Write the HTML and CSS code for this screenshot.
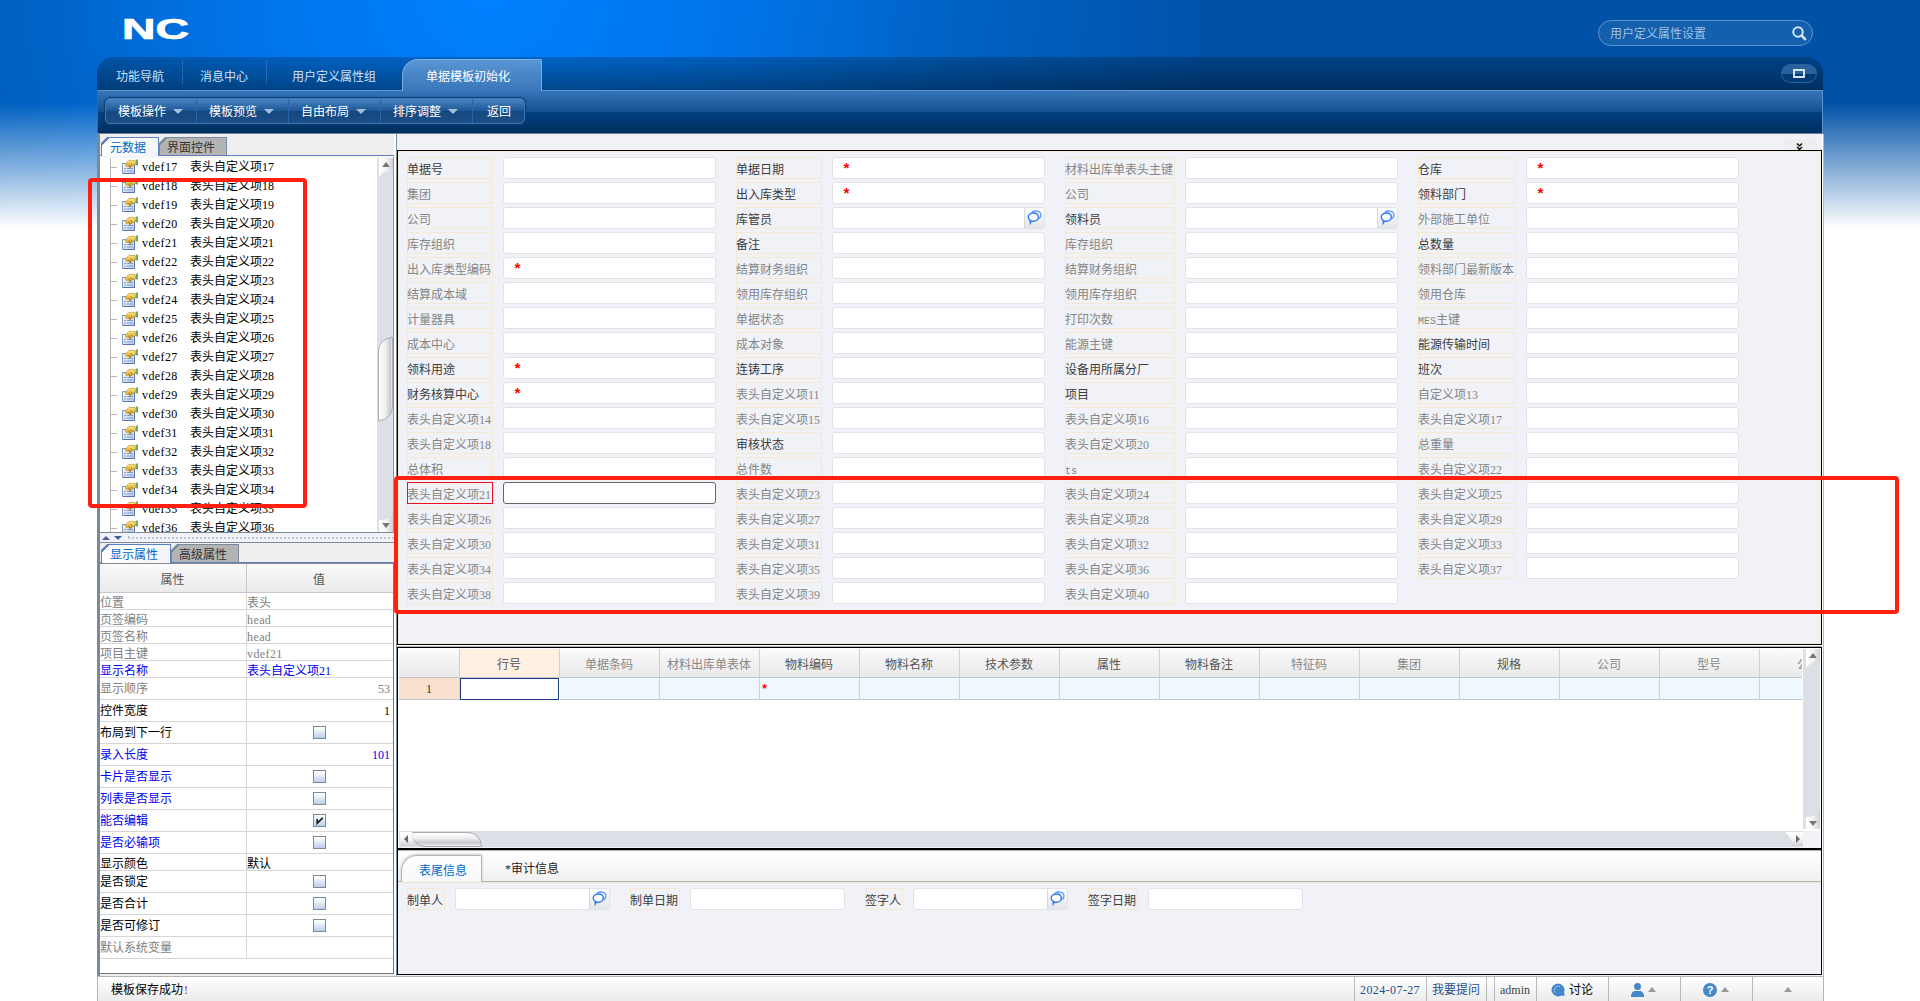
FILE: index.html
```html
<!DOCTYPE html>
<html lang="zh-CN">
<head>
<meta charset="utf-8">
<title>单据模板初始化</title>
<link rel="stylesheet" href="styles.css">
</head>
<body>
<svg class="defs" width="0" height="0" aria-hidden="true">
  <defs>
    <linearGradient id="gold" x1="0" y1="0" x2="0" y2="1"><stop offset="0" stop-color="#ffe680"/><stop offset="1" stop-color="#d29a1c"/></linearGradient>
    <linearGradient id="sheet" x1="0" y1="0" x2="1" y2="1"><stop offset="0" stop-color="#fff"/><stop offset="1" stop-color="#b4caec"/></linearGradient>
    <symbol id="i-prop" viewBox="0 0 17 16">
      <path d="M.5 4.500h12v10H.5z" fill="url(#sheet)" stroke="#7f98c0"/>
      <path d="M1 14.500h11.500v-9" fill="none" stroke="#5a76a8"/>
      <path d="M2 9.500h2M5 9.500h6M2 12h2M5 12h6" stroke="#8299c2"/>
      <path d="M3 5.500l4-4.200h3l3 .2.800 4-3.300 1.200-2.500 2.500-2-2.200-1.500.8z" fill="url(#gold)" stroke="#b08a2c" stroke-width=".6"/>
      <path d="M6.500 6l2.500 2M8.500 4.500l2 2" stroke="#7a5a14" stroke-width=".8"/>
      <path d="M13.800 .5h2.200v6h-2.200z" fill="#6bab62"/>
    </symbol>
    <symbol id="i-ref" viewBox="0 0 15 15">
      <path d="M5 2.300C7.500 .2 13.700 .6 13.900 4.800c0 2.200-1.200 3.600-2.700 4.200" fill="none" stroke="#5c9bf8" stroke-width="1.300"/>
      <path d="M6.300 3c3 0 5 1.800 5 4.100s-2 4.200-5 4.200c-.8 0-1.300-.1-1.900-.3L3.300 13 3.200 10.300C2 9.500 1.200 8.400 1.200 7.100 1.200 4.800 3.300 3 6.300 3z" fill="#fff" stroke="#2f7bf5" stroke-width="1.400"/>
    </symbol>
  </defs>
</svg>

<header class="top">
  <svg class="logo" width="68" height="24" viewBox="0 0 68 24"><text x="0" y="22" textLength="67" lengthAdjust="spacingAndGlyphs">NC</text></svg>
  <div class="search"><span>用户定义属性设置</span>
    <svg width="15" height="15" viewBox="0 0 15 15"><circle cx="6" cy="6" r="4.700" fill="none" stroke="#d5e4f5" stroke-width="2"/><path d="M9.500 9.500l4.300 4.300" stroke="#d5e4f5" stroke-width="2.600"/></svg>
  </div>
</header>

<div class="frame">
  <nav class="nav">
    <span class="nav-item n1">功能导航</span>
    <span class="nav-item n2">消息中心</span>
    <span class="nav-item n3">用户定义属性组</span>
    <span class="nav-item active">单据模板初始化</span>
    <span class="restore"><i></i></span>
  </nav>
  <div class="toolbar">
    <div class="tool-group">
      <span class="tool">模板操作<i></i></span>
      <span class="tool">模板预览<i></i></span>
      <span class="tool">自由布局<i></i></span>
      <span class="tool">排序调整<i></i></span>
      <span class="tool last">返回</span>
    </div>
  </div>

  <main class="main">
    <aside class="side">
      <div class="tabs t1"><span class="tab on">元数据</span><span class="tab">界面控件</span></div>
      <div class="tree-box">
        <div class="tree" id="tree"></div>
        <div class="vscroll"><i class="up"></i><b></b><i class="down"></i></div>
      </div>
      <div class="splitter"><i class="up"></i><i class="down"></i><em></em></div>
      <div class="tabs t2"><span class="tab on">显示属性</span><span class="tab">高级属性</span></div>
      <div class="props-box">
        <div class="props-head"><span>属性</span><span>值</span></div>
        <div id="props"></div>
      </div>
    </aside>

    <section class="work">
      <div class="chip-bar"><span class="chip"><svg width="7" height="8" viewBox="0 0 7 8"><path d="M1 .5l2.500 2.500L6 .5M1 4l2.500 2.500L6 4" fill="none" stroke="#111" stroke-width="1.500"/></svg></span></div>
      <div class="form-box"><div class="form" id="form"></div></div>
      <div class="gap"></div>
      <div class="grid-box">
        <div class="grid-main">
          <div class="grid" id="grid"></div>
          <div class="vscroll tall"><i class="up"></i><i class="down"></i></div>
        </div>
        <div class="hrow"><div class="hscroll"><i class="left"></i><b></b><i class="right"></i></div></div>
      </div>
      <div class="foot-box">
        <div class="foot-tabs"><span class="ftab on">表尾信息</span><span class="ftab">*审计信息</span></div>
        <div class="foot-form">
          <span class="label dark">制单人</span><span class="field"><span class="ref"><svg width="15" height="15"><use href="#i-ref"/></svg></span></span>
          <span class="label dark">制单日期</span><span class="field"></span>
          <span class="label dark">签字人</span><span class="field"><span class="ref"><svg width="15" height="15"><use href="#i-ref"/></svg></span></span>
          <span class="label dark">签字日期</span><span class="field"></span>
        </div>
      </div>
    </section>
  </main>

  <footer class="status">
    <span class="msg">模板保存成功<em>!</em></span>
    <span class="cell c-date">2024-07-27</span>
    <span class="cell c-ask">我要提问</span>
    <span class="cell c-gap"></span>
    <span class="cell c-user">admin</span>
    <span class="cell c-talk"><svg width="14" height="14" viewBox="0 0 14 14"><path d="M7 .5a6.500 6.500 0 1 0 3.500 12L13.500 13l-.3-4A6.500 6.500 0 0 0 7 .5z" fill="#4488cb"/><path d="M4 9.500A4 4 0 0 1 9 3.500" fill="none" stroke="#9cc2e8"/></svg>讨论</span>
    <span class="cell c-ic"><svg width="13" height="14" viewBox="0 0 13 14"><circle cx="6.500" cy="3.500" r="3.500" fill="#4488cb"/><path d="M0 14c0-4 2-6 4-6h5c2 0 4 2 4 6z" fill="#4488cb"/></svg><i></i></span>
    <span class="cell c-ic"><svg width="14" height="14" viewBox="0 0 14 14"><circle cx="7" cy="7" r="7" fill="#4488cb"/><text class="q" x="7" y="11" text-anchor="middle">?</text></svg><i></i></span>
    <span class="cell c-last"><i></i></span>
  </footer>
</div>

<div class="mark mark-tree"></div>
<div class="mark mark-form"></div>
<script src="app.js"></script>
</body>
</html>
```
FILE: app.js
```js
const el = (id) => document.getElementById(id);

// Metadata tree
let tree = '';
for (let n = 17; n <= 36; n++) {
  tree += `<div class="node"><svg width="17" height="16"><use href="#i-prop"/></svg><span class="code">vdef${n}</span><span>表头自定义项${n}</span></div>`;
}
el('tree').innerHTML = tree;

// Header form. Flags: d = dark label, * = required, r = reference picker, s = selected
const fields = [
  '单据号|d', '单据日期|d*', '材料出库单表头主键|', '仓库|d*',
  '集团|', '出入库类型|d*', '公司|', '领料部门|d*',
  '公司|', '库管员|dr', '领料员|dr', '外部施工单位|',
  '库存组织|', '备注|d', '库存组织|', '总数量|d',
  '出入库类型编码|*', '结算财务组织|', '结算财务组织|', '领料部门最新版本|',
  '结算成本域|', '领用库存组织|', '领用库存组织|', '领用仓库|',
  '计量器具|', '单据状态|', '打印次数|', '<span class="caps">MES</span>主键|',
  '成本中心|', '成本对象|', '能源主键|', '能源传输时间|d',
  '领料用途|d*', '连铸工序|d', '设备用所属分厂|d', '班次|d',
  '财务核算中心|d*', '表头自定义项11|', '项目|d', '自定义项13|',
  '表头自定义项14|', '表头自定义项15|', '表头自定义项16|', '表头自定义项17|',
  '表头自定义项18|', '审核状态|d', '表头自定义项20|', '总重量|',
  '总体积|', '总件数|', '<span class="caps">ts</span>|', '表头自定义项22|',
  '表头自定义项21|s', '表头自定义项23|', '表头自定义项24|', '表头自定义项25|',
  '表头自定义项26|', '表头自定义项27|', '表头自定义项28|', '表头自定义项29|',
  '表头自定义项30|', '表头自定义项31|', '表头自定义项32|', '表头自定义项33|',
  '表头自定义项34|', '表头自定义项35|', '表头自定义项36|', '表头自定义项37|',
  '表头自定义项38|', '表头自定义项39|', '表头自定义项40|'
];
el('form').innerHTML = fields.map((f) => {
  const [name, flags] = f.split('|');
  const has = (c) => flags.includes(c);
  const inner = (has('*') ? '<span class="req">*</span>' : '') +
    (has('r') ? '<span class="ref"><svg width="15" height="15"><use href="#i-ref"/></svg></span>' : '');
  const sel = has('s') ? ' selected' : '';
  return `<span class="label${has('d') ? ' dark' : ''}${sel}">${name}</span><span class="field${sel}">${inner}</span>`;
}).join('');

// Property sheet: name, value, tone, kind
const props = [
  ['位置', '表头', 'gray', 'short'], ['页签编码', 'head', 'gray', 'short'], ['页签名称', 'head', 'gray', 'short'],
  ['项目主键', 'vdef21', 'gray', 'short'], ['显示名称', '表头自定义项21', 'blue', 'short'],
  ['显示顺序', '53', 'gray', 'num'], ['控件宽度', '1', 'black', 'num'], ['布局到下一行', 0, 'black', 'box'],
  ['录入长度', '101', 'blue', 'num'], ['卡片是否显示', 0, 'blue', 'box'], ['列表是否显示', 0, 'blue', 'box'],
  ['能否编辑', 1, 'blue', 'box'], ['是否必输项', 0, 'blue', 'box'], ['显示颜色', '默认', 'black', 'short'],
  ['是否锁定', 0, 'black', 'box'], ['是否合计', 0, 'black', 'box'], ['是否可修订', 0, 'black', 'box'],
  ['默认系统变量', '', 'gray', '']
];
const tick = '<svg width="11" height="11" viewBox="0 0 11 11"><path d="M3.200 4v4.200L8.800 2.800" fill="none" stroke="#222" stroke-width="1.700"/></svg>';
el('props').innerHTML = props.map(([name, value, tone, kind]) => {
  const v = kind === 'box' ? `<i class="check">${value ? tick : ''}</i>` : value;
  const code = /^[a-z]/.test(value) ? ' code' : '';
  return `<div class="prop ${tone} ${kind}"><span>${name}</span><span class="val${code}">${v}</span></div>`;
}).join('');

// Body grid; a leading ~ marks a muted column
const cols = ['行号', '~单据条码', '~材料出库单表体', '物料编码', '物料名称', '技术参数', '属性', '物料备注', '~特征码', '~集团', '规格', '~公司', '~型号', '~公司'];
el('grid').innerHTML = '<span class="gh corner"></span>' +
  cols.map((c, i) => `<span class="gh${i ? '' : ' cur'}${c[0] === '~' ? ' muted' : ''}">${c.replace('~', '')}</span>`).join('') +
  '<span class="gc rowno">1</span>' +
  cols.map((c, i) => `<span class="gc${i ? '' : ' focus'}">${i === 3 ? '<span class="req">*</span>' : ''}</span>`).join('');
```
FILE: styles.css
```css
* { box-sizing: border-box; }
body {
  margin: 0; width: 1920px; height: 1001px; overflow: hidden; position: relative;
  font: 12px/16px "Liberation Serif", "Noto Sans CJK SC", serif; color: #000;
  background:
    linear-gradient(to bottom, rgba(255,255,255,0) 103px, #fff 228px),
    radial-gradient(ellipse 720px 560px at 490px 0, #0080ff 0, #0074e8 35%, #0062c4 65%, #0052a8 100%);
}
i, em { font-style: normal; display: block; }
svg { display: block; flex: none; }
.defs { position: absolute; }

/* Top banner */
.top { height: 57px; display: flex; justify-content: space-between; padding: 17px 107px 0 122px; }
.logo { overflow: visible; }
.logo text { font: bold 29px "Liberation Sans", sans-serif; fill: #fff; stroke: #fff; stroke-width: .7px; }
.search {
  margin-top: 3px; width: 215px; height: 26px; border: 1px solid #5b93cf; border-radius: 13px;
  background: #1560ac; color: #9dc0e4; display: flex; align-items: center; justify-content: space-between; padding: 1px 5px 0 11px;
}

/* Frame and navigation */
.frame { margin-left: 97px; width: 1727px; height: 944px; display: flex; flex-direction: column; }
.nav {
  height: 34px; display: flex; border-radius: 16px 16px 0 0; border-bottom: 1px solid #5b93cf; color: #d0e0f2; margin-right: 1px;
  background: linear-gradient(to bottom, rgba(0,0,0,.2), rgba(0,0,0,.42)), radial-gradient(ellipse 720px 560px at 393px -57px, #0080ff, #0074e8 35%, #0062c4 65%, #0052a8);
}
.nav-item { padding-top: 12px; height: 34px; }
.n1 { width: 86px; padding-left: 19px; }
.n2 { width: 84px; padding-left: 17px; }
.n3 { width: 135px; padding-left: 25px; }
.n1, .n2 { background: repeating-linear-gradient(to bottom, #4c82be 0 1px, transparent 1px 2px) right 4px / 1px 24px no-repeat; }
.nav .active {
  width: 140px; height: 32px; margin-top: 2px; padding: 9px 0 0 23px; color: #fff; border: 1px solid #7badde; border-bottom: 0;
  border-radius: 16px 2px 0 0; background: linear-gradient(to bottom, #5a96d4, #3976ba);
}
.restore { margin: 7px 6px 0 auto; width: 36px; height: 19px; border: 1px solid #2f659f; border-radius: 10px; background: linear-gradient(to bottom, #2a609c 50%, #003a74 50%); display: grid; place-items: center; }
.restore i { width: 12px; height: 9px; border: 2px solid #d6e3f0; }
.toolbar {
  height: 43px; padding: 7px 0 0 7px; border-bottom: 1px solid #6d8299; border-left: 1px solid #2c6cb4; border-right: 1px solid #5b93cf; margin-right: 1px;
  background: linear-gradient(to bottom, #3675b9 0, #14508f 21px, #004080 21px, #002f60 100%);
}
.tool-group {
  width: 420px; height: 26px; display: flex; border: 1px solid #3c76b4; border-radius: 5px; color: #fff; box-shadow: 0 0 1px 1px #0f3c70;
  background: linear-gradient(to bottom, #4a84c0 0, #1d5696 50%, #16487f 50%, #1c4f88 100%);
}
.tool { width: 92px; display: flex; align-items: center; padding: 2px 0 0 12px; gap: 7px; border-right: 1px solid #2a66a8; height: 24px; }
.tool:first-child { width: 91px; }
.tool.last { width: auto; border: 0; padding-left: 14px; }
.tool i { border: 5px solid transparent; border-top-color: #a5c0de; border-bottom: 0; margin-top: -2px; }

/* Main area */
.main { height: 842px; display: flex; background: #fff; border-left: 3px solid #7a8a99; border-right: 1px solid #b8b8b8; }
.side { width: 294px; background: #eee; display: flex; flex-direction: column; }
.tabs { display: flex; border-bottom: 1px solid #5f7fc0; padding-left: 1px; }
.t1 { height: 22px; padding-top: 3px; }
.t2 { height: 20px; padding-top: 1px; }
.tab { height: 18px; line-height: 20px; border: 1px solid #7a8a99; border-bottom: 0; padding: 0 10px 0 7px; background: linear-gradient(135deg, #7a8a99 5px, #b3b3b3 5px); color: #333; clip-path: polygon(6px 0, 100% 0, 100% 100%, 0 100%, 0 6px); width: 68px; }
.tab.on { background: linear-gradient(135deg, #5f7fc0 5px, #fff 5px, #f2f3f7); color: #0068c8; border-color: #5f7fc0; height: 19px; width: 58px; padding: 0 0 0 8px; }
.t2 .tab.on { width: 70px; }

.tree-box { height: 377px; border-top: 2px solid #f4f5f8; border-right: 1px solid #8a98a8; border-bottom: 1px solid #7a8a99; background: #fff; display: flex; overflow: hidden; }
.tree { flex: 1; padding-left: 10px; overflow: hidden; }
.node { height: 19px; display: flex; align-items: center; border-left: 1px solid #b5b5b5; background: linear-gradient(#b5b5b5, #b5b5b5) 0 9px / 6px 1px no-repeat; padding: 0 0 1px 11px; white-space: pre; }
.node svg { margin-right: 3px; }
.node .code { width: 48px; }
.code { letter-spacing: .4px; }
.caps { font: 10px "Liberation Mono", monospace; }
.vscroll { width: 16px; background: #dcdfe5; display: flex; flex-direction: column; align-items: flex-end; }
.vscroll i { width: 14px; height: 19px; background: linear-gradient(to right, #fff, #f4f4f4 50%, #cfd0d3); display: grid; place-items: center; }
.vscroll i::after, .splitter i::after { content: ""; border: 4px solid transparent; border-top: 0; border-bottom: 5px solid #777; }
.vscroll .down::after, .splitter .down::after { border-top: 5px solid #777; border-bottom: 0; }
.vscroll .up { clip-path: path("M0 0H14V12Q3 13 0 19Z"); place-items: start center; padding-top: 4px; }
.vscroll .down { margin-top: auto; clip-path: path("M0 19H14V0Q11 7 0 7Z"); place-items: end center; padding-bottom: 4px; }
.vscroll b { margin-top: 160px; width: 15px; height: 84px; border: 1px solid #aaadb3; border-radius: 14px 0 14px 0; background: linear-gradient(to right, #fff, #eee 50%, #c6c8cb 90%, #eee); }

.splitter { height: 10px; background: #f0f2f7; border-bottom: 1px solid #7a8a99; display: flex; padding: 3px 0 0 2px; gap: 4px; }
.splitter i::after { display: block; width: 0; border-bottom: 4px solid #3c5fa0; }
.splitter .down::after { border-top: 4px solid #3c5fa0; }
.splitter em { flex: 1; height: 4px; background: linear-gradient(#a0a8b6, #a0a8b6) 0 0 / 1px 1px no-repeat, radial-gradient(circle at 1px 1px, #a8b0bd .6px, transparent .9px) 0 1px / 4px 4px; margin-left: 2px; }

.props-box { height: 411px; background: #fff; border: 1px solid #777; border-left: 0; border-top: 1px solid #8a8a8a; }
.props-head { height: 29px; display: flex; border-bottom: 1px solid #c8c8c8; background: linear-gradient(to bottom, #fafafa, #ebebeb); color: #555; text-align: center; line-height: 32px; }
.props-head span:first-child { width: 147px; border-right: 1px solid #c8c8c8; padding-right: 1px; }
.props-head span:last-child { flex: 1; padding-right: 2px; }
.prop { height: 22px; line-height: 23px; display: flex; border-bottom: 1px solid #d6d6d6; }
.prop.short { height: 17px; line-height: 20px; }
.prop span:first-child { width: 147px; border-right: 1px solid #d6d6d6; }
.prop .val { flex: 1; }
.num .val { text-align: right; padding-right: 3px; }
.box .val { display: flex; justify-content: center; align-items: center; padding-right: 1px; }
.gray { color: #808080; }
.blue { color: #0000f0; }
.check { width: 13px; height: 13px; border: 1px solid #7a8a99; background: linear-gradient(to bottom, #fff 10%, #dfe8f3 50%, #b9cfe8); }

/* Work area */
.work { margin: 0 1px 0 2px; width: 1426px; border-left: 1px solid #7a8a99; background: #f0f2f7; display: flex; flex-direction: column; }
.chip-bar { height: 16px; display: flex; justify-content: flex-end; align-items: flex-end; padding-right: 5px; }
.chip { width: 33px; height: 11px; background: #eee; padding: 4px 0 0 12px; }
.form-box { height: 495px; border: 1px solid #000; padding: 6px 0 0 9px; box-shadow: inset 0 0 0 1px #f3ecd8; }
.form { display: grid; grid-auto-rows: 22px; row-gap: 3px; grid-template-columns: 96px 233px 96px 233px 120px 233px 108px 213px; }
.label { height: 22px; border: 1px solid #f5e9cf; color: #858585; white-space: nowrap; margin-right: 10px; line-height: 24px; text-indent: -1px; }
.dark { color: #3c3c3c; }
.label.selected { border-color: #e8101c; }
.field { width: 213px; height: 22px; border: 1px solid #e2e3e6; border-radius: 3px; background: #fff; display: flex; overflow: hidden; }
.field.selected { border-color: #666; }
.req { color: #f00; font: bold 15px/20px "Liberation Mono", monospace; margin: 3px 0 0 9px; }
.ref { margin-left: auto; width: 20px; border-left: 1px solid #d8d8dc; background: linear-gradient(to bottom, #fff, #e4e5e9); padding: 2px 0 0 2px; }
.gap { height: 2px; background: #fff; border-bottom: 1px solid #a8b2c0; }

.grid-box { height: 203px; border: 1px solid #000; border-bottom-width: 2px; padding: 1px 1px 0 1px; background: #fff; display: flex; flex-direction: column; }
.grid-main { height: 181px; display: flex; padding-bottom: 1px; }
.grid { width: 1404px; margin-right: 1px; display: grid; grid-template-columns: 61px repeat(14, 100px); grid-template-rows: 29px 22px; align-content: start; overflow: hidden; }
.gh { text-align: center; line-height: 32px; padding-right: 1px; color: #555; border-right: 1px solid #d0d0d0; border-bottom: 1px solid #c4c6c8; background: linear-gradient(to bottom, #fafafa, #e9e9e9); }
.gh.muted { color: #888; }
.gh.cur { background: #fff0e2; color: #555; }
.gc { background: #eff7ff; border-right: 1px solid #ccd3da; border-bottom: 1px solid #c4c6c8; display: flex; }
.gc .req { margin: 2px 0 0 1px; font-size: 12px; }
.rowno { background: #fae0ce; justify-content: center; line-height: 23px; color: #333; }
.focus { background: #fff; border: 1px solid #1f3d8a; margin-right: 1px; }
.tall { height: 180px; width: 17px; }
.tall .down::after { margin-bottom: -1px; }
.hrow { height: 17px; background: #f0f2f7; padding-right: 17px; margin-top: 1px; }
.hscroll { height: 16px; background: #dcdfe5; display: flex; align-items: center; padding-left: 1px; }
.hscroll i { width: 18px; height: 14px; background: linear-gradient(to bottom, #fff, #f4f4f4 50%, #cfd0d3); display: flex; align-items: center; padding-left: 4px; }
.hscroll i::after { content: ""; border: 4px solid transparent; border-left: 0; border-right: 4px solid #666; }
.hscroll .left { clip-path: path("M0 0H12Q13 12 18 14H0Z"); margin-right: -7px; }
.hscroll b { width: 71px; height: 15px; border: 1px solid #aaadb3; border-radius: 0 14px 0 14px; background: linear-gradient(to bottom, #fff, #eee 40%, #c6c8cb 75%, #eee); }
.hscroll .right { margin-left: auto; clip-path: path("M0 0H18V14H7Q6 4 0 0Z"); padding-left: 11px; }
.hscroll .right::after { border-right: 0; border-left: 4px solid #666; }

.foot-box { height: 125px; border: 1px solid #000; border-top: 0; }
.foot-tabs { height: 32px; border-top: 1px solid #b0b2b6; border-bottom: 1px solid #b0b2b6; box-shadow: 0 1px #f5e9cf; background: linear-gradient(to bottom, #fff, #f0f0f0); display: flex; padding: 4px 0 0 3px; }
.ftab { padding: 6px 0 0 23px; color: #222; }
.ftab.on { width: 81px; height: 27px; padding: 7px 0 0 17px; color: #0068c8; background: linear-gradient(to bottom, #fff, #f6f7fa); border: 1px solid #b0b2b6; border-bottom: 0; border-radius: 16px 2px 0 0; box-shadow: 0 -1px 3px #ccc; }
.foot-form { display: flex; padding: 6px 0 0 9px; }
.foot-form .field { width: 155px; margin-right: 20px; }
.foot-form .label { width: 38px; }
.foot-form .label:nth-child(4n+3) { width: 50px; }

/* Status bar */
.status { height: 25px; border: 1px solid #b4b4b4; border-width: 1px 1px 0; background: linear-gradient(to bottom, #fff, #ebebeb); display: flex; }
.msg { flex: 1; padding: 5px 0 0 13px; display: flex; }
.msg em { color: #a0108a; margin-left: 1px; }
.cell { border-left: 1px solid #b8b8b8; height: 25px; display: flex; align-items: center; white-space: nowrap; }
.cell i { border: 4px solid transparent; border-top: 0; border-bottom: 5px solid #999; }
.c-date { width: 72px; padding-left: 5px; color: #1d4f8f; letter-spacing: .4px; }
.c-ask { width: 60px; padding-left: 5px; color: #1d4f8f; }
.c-gap { width: 8px; }
.c-user { width: 42px; padding-left: 5px; color: #444; }
.c-talk { width: 72px; padding-left: 14px; gap: 4px; }
.c-ic { width: 72px; padding-left: 22px; gap: 4px; }
.c-last { width: 71px; padding-left: 31px; }
.q { font: bold 11px "Liberation Sans", sans-serif; fill: #fff; }

/* Red annotation frames over the page */
.mark { position: absolute; border: 4px solid #ff2010; border-radius: 4px; }
.mark-tree { left: 88px; top: 178px; width: 219px; height: 330px; }
.mark-form { left: 394px; top: 476px; width: 1505px; height: 138px; }
```
